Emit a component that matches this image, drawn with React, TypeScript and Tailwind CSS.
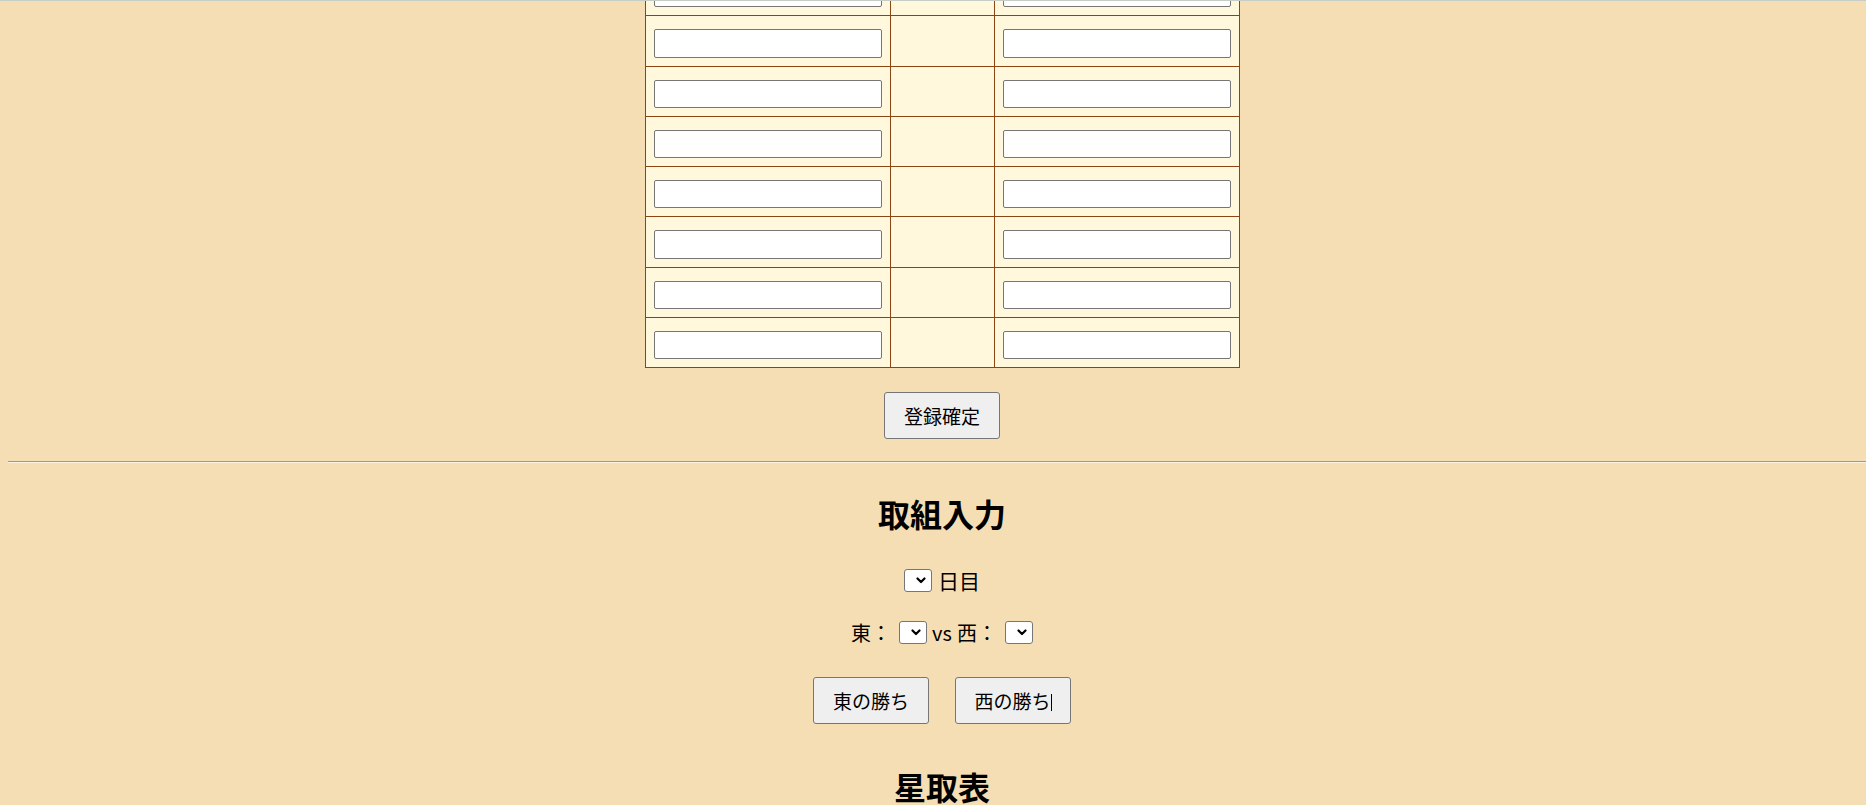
const rows = Array.from({ length: 8 }, (_, i) => i);

function Sel() {
  return (
    <span className="inline-flex h-[23px] w-[28px] items-center justify-end rounded-[3px] border border-[#767676] bg-white pr-[5px]">
      <svg width="10" height="7" viewBox="0 0 10 7">
        <path d="M1.5 1.5l3.5 3.5 3.5-3.5" fill="none" stroke="#000" strokeWidth="2.2" strokeLinecap="round" strokeLinejoin="round" />
      </svg>
    </span>
  );
}

function Btn({ children }: { children: React.ReactNode }) {
  return (
    <button
      type="button"
      className="h-[47px] w-[116px] rounded-[3px] border border-[#767676] bg-[#efefef] text-[19px] leading-[28px] text-black"
    >
      {children}
    </button>
  );
}

export default function App() {
  return (
    <div
      className="h-[805px] overflow-hidden border-t border-[#c6cdc6] bg-[#f5deb3] text-[20px] text-black"
      style={{ fontFamily: '"Noto Sans CJK JP", "Noto Sans", sans-serif' }}
    >
      <div className="-mt-[36px] flex flex-col items-center pl-[18px]">
        <table className="w-[595px] table-fixed border-collapse">
          <colgroup>
            <col className="w-[245px]" />
            <col className="w-[104px]" />
            <col className="w-[245px]" />
          </colgroup>
          <tbody>
            {rows.map((r) => (
              <tr key={r}>
                <td className="border border-[#8b4513] bg-[#fff8dc] px-2 pt-[13px] pb-[8px]">
                  <input className="block h-[28.3px] w-full rounded-[2px] border border-[#767676] bg-white" />
                </td>
                <td className="border border-[#8b4513] bg-[#fff8dc]"></td>
                <td className="border border-[#8b4513] bg-[#fff8dc] px-2 pt-[13px] pb-[8px]">
                  <input className="block h-[28.3px] w-full rounded-[2px] border border-[#767676] bg-white" />
                </td>
              </tr>
            ))}
          </tbody>
        </table>

        <div className="mt-[24px]">
          <Btn>登録確定</Btn>
        </div>
      </div>

      <div className="mt-[22px] ml-2 border-t border-b border-t-[#9d968c] border-b-[#fbf3e3]" />

      <div className="flex flex-col items-center pl-[18px]">
        <h2 className="mt-[27px] text-[32px] leading-[46px] font-bold">取組入力</h2>

        <div className="mt-[30px] flex h-[29px] items-center gap-[6px]">
          <Sel />
          <span className="text-[21px] leading-[29px]">日目</span>
        </div>

        <div className="mt-[23px] flex h-[29px] items-center">
          <span className="leading-[29px]">東：</span>
          <span className="ml-[8px] flex">
            <Sel />
          </span>
          <span className="ml-[5px] leading-[29px]">vs</span>
          <span className="ml-[5px] leading-[29px]">西：</span>
          <span className="ml-[8px] flex">
            <Sel />
          </span>
        </div>

        <div className="mt-[30px] flex gap-[26px]">
          <Btn>東の勝ち</Btn>
          <Btn>
            西の勝ち<span className="inline-block h-[17px] w-px bg-black align-[-2px]" />
          </Btn>
        </div>

        <h2 className="mt-[39px] text-[32px] leading-[46px] font-bold">星取表</h2>
      </div>
    </div>
  );
}
